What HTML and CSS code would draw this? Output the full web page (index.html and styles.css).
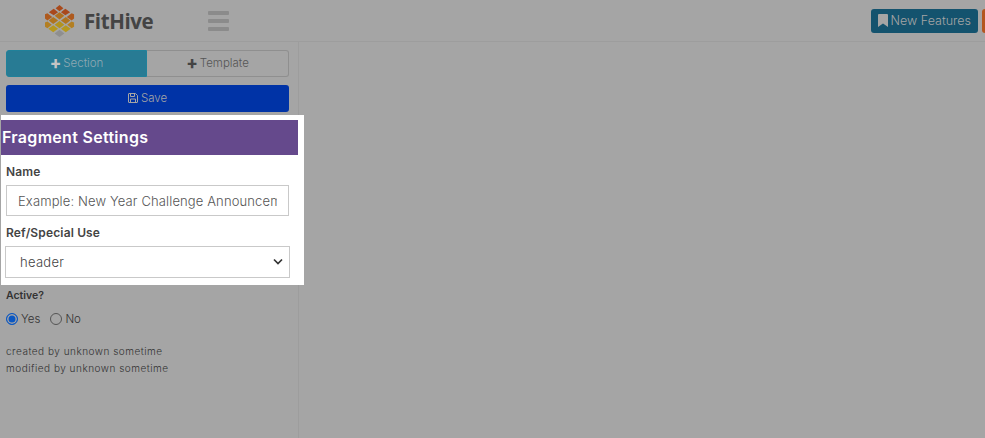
FILE: index.html
```html
<!DOCTYPE html>
<html lang="en">
<head>
    <meta charset="UTF-8">
    <meta name="viewport" content="width=device-width, initial-scale=1.0">
    <title>FitHive</title>
    <link rel="stylesheet" href="styles.css">
</head>
<body>
    <div class="topbar">
        <div class="brand">
            <svg class="logo" width="31" height="33" viewBox="0 0 32 32" preserveAspectRatio="none">
                <polygon points="16,1 20,4 16,7 12,4" fill="#a84a1c"/>
                <polygon points="10,4.500 14.500,8 10,11 5,8" fill="#a9481c"/>
                <polygon points="22,4.500 27,8 22,11 17.500,8" fill="#a9481c"/>
                <polygon points="16,8 21,11.500 16,15 11,11.500" fill="#b0701f"/>
                <polygon points="3.500,9 8.500,12.500 3.500,16 1,14 1,10" fill="#ae5a1e"/>
                <polygon points="28.500,9 31,10 31,14 28.500,16 23.500,12.500" fill="#ae5a1e"/>
                <polygon points="9.500,12.500 14.500,16 9.500,19.500 5,16" fill="#b0741f"/>
                <polygon points="22.500,12.500 27,16 22.500,19.500 17.500,16" fill="#b0741f"/>
                <polygon points="16,16.500 21,20 16,23.500 11,20" fill="#b2931e"/>
                <polygon points="3.500,17 8,20 3.500,23.500 1,22 1,18" fill="#b37f22"/>
                <polygon points="28.500,17 31,18 31,22 28.500,23.500 24,20" fill="#b37f22"/>
                <polygon points="9.500,20.500 14.500,24 9.500,27.500 4.500,24" fill="#b5981e"/>
                <polygon points="22.500,20.500 27.500,24 22.500,27.500 17.500,24" fill="#b5981e"/>
                <polygon points="16,25 21,28.500 16,32 11,28.500" fill="#8f8f8f"/>
            </svg>
            <span class="brand-name">FitHive</span>
        </div>
        <div class="burger"><span></span><span></span><span></span></div>
        <div class="topbar-actions">
            <button class="btn-features">
                <svg width="10" height="13" viewBox="0 0 10 13"><path d="M0 1a1 1 0 0 1 1-1h8a1 1 0 0 1 1 1v12L5 9.500 0 13z" fill="#a5a5a5"/></svg>
                New Features
            </button>
            <div class="btn-orange"></div>
        </div>
    </div>

    <div class="main">
        <div class="sidebar">
            <div class="tabs">
                <div class="tab tab-active"><span class="plus">+</span> Section</div>
                <div class="tab"><span class="plus">+</span> Template</div>
            </div>
            <button class="btn-save">
                <svg width="10" height="10" viewBox="0 0 10 10"><path d="M1 .5h6.500L9.500 2.500V9a.5.5 0 0 1-.5.5H1A.5.5 0 0 1 .5 9V1A.5.5 0 0 1 1 .5zM2.500 1v2.500h4V1M2.500 9V6h5v3" fill="none" stroke="#a5a5a5"/></svg>
                Save
            </button>

            <div class="spotlight">
                <h2 class="panel-title">Fragment Settings</h2>
                <div class="panel-body">
                    <label class="field-label">Name</label>
                    <input class="field-input" type="text" placeholder="Example: New Year Challenge Announcement">
                    <label class="field-label">Ref/Special Use</label>
                    <div class="field-select">
                        <span>header</span>
                        <svg width="10" height="7" viewBox="0 0 10 7"><path d="M1 1.500l4 4 4-4" fill="none" stroke="#333" stroke-width="1.700"/></svg>
                    </div>
                </div>
            </div>

            <div class="active-label">Active?</div>
            <div class="radios">
                <label class="radio-item"><span class="radio radio-on"></span>Yes</label>
                <label class="radio-item"><span class="radio"></span>No</label>
            </div>
            <div class="meta">
                <p>created by unknown sometime</p>
                <p>modified by unknown sometime</p>
            </div>
        </div>
        <div class="canvas"></div>
    </div>
</body>
</html>
```

FILE: styles.css
```css
* {
    margin: 0;
    padding: 0;
    box-sizing: border-box;
}

html, body {
    height: 100%;
    overflow: hidden;
}

body {
    font-family: 'Inter', sans-serif;
    background-color: #a5a5a5;
    color: #444;
    display: flex;
    flex-direction: column;
}

.topbar {
    height: 42px;
    flex: none;
    display: flex;
    align-items: center;
    border-bottom: 1px solid #9d9d9d;
    padding-left: 44px;
}

.brand {
    display: flex;
    align-items: center;
    gap: 9px;
    width: 164px;
}

.logo {
    flex: none;
}

.brand-name {
    font-family: 'Open Sans', sans-serif;
    font-size: 20.500px;
    font-weight: 700;
    letter-spacing: -0.4px;
    color: #444;
}

.burger {
    width: 21px;
    display: flex;
    flex-direction: column;
    gap: 4px;
}

.burger span {
    height: 4px;
    border-radius: 1px;
    background-color: #8b8b8b;
}

.topbar-actions {
    margin-left: auto;
    display: flex;
    align-items: center;
    gap: 4px;
    margin-right: -4px;
}

.btn-features {
    height: 24px;
    padding: 0 7px;
    display: flex;
    align-items: center;
    gap: 3px;
    border: none;
    border-radius: 3px;
    background-color: #14536e;
    color: #a5a5a5;
    font-family: inherit;
    font-size: 12.500px;
    font-weight: 300;
}

.btn-orange {
    width: 7px;
    height: 24px;
    border-radius: 3px 0 0 3px;
    background-color: #b4561f;
}

.main {
    flex: 1;
    display: flex;
}

.sidebar {
    width: 299px;
    flex: none;
    border-right: 1px solid #9d9d9d;
    padding: 8px 9px 0 6px;
}

.tabs {
    display: flex;
    height: 27px;
}

.tab {
    width: 142px;
    flex: none;
    display: flex;
    align-items: center;
    justify-content: center;
    gap: 2px;
    padding-bottom: 1px;
    font-size: 11.500px;
    font-weight: 300;
    color: #555;
    border: 1px solid #8f8f8f;
    border-left: none;
    border-radius: 0 3px 3px 0;
}

.tab-active {
    width: 141px;
    background-color: #287b94;
    border: 1px solid #20819a;
    border-radius: 3px 0 0 3px;
    color: #8fa9b3;
}

.plus {
    font-size: 17px;
    font-weight: 800;
    line-height: 1;
    color: #444;
}

.tab-active .plus {
    color: #c4c4c4;
}

.btn-save {
    width: 100%;
    height: 27px;
    margin-top: 8px;
    padding-bottom: 2px;
    display: flex;
    align-items: center;
    justify-content: center;
    gap: 3px;
    border: none;
    border-radius: 3px;
    background-color: #0033a6;
    color: #a5a5a5;
    font-family: inherit;
    font-size: 11.500px;
    font-weight: 300;
}

.spotlight {
    margin: 3px -15px 0 -5px;
    height: 170px;
    padding-top: 5px;
    background-color: #fff;
}

.panel-title {
    height: 35px;
    width: 297px;
    display: flex;
    align-items: center;
    padding: 0 0 2px 1px;
    background-color: #65498c;
    color: #fff;
    font-size: 16px;
    font-weight: 600;
    letter-spacing: 0.3px;
}

.panel-body {
    padding: 9px 15px 0 5px;
}

.field-label {
    display: block;
    font-size: 12px;
    font-weight: 600;
    letter-spacing: 0.15px;
    color: #444;
}

.field-input {
    display: block;
    width: 283px;
    height: 31px;
    margin: 6px 0 9px;
    padding: 0 11px;
    border: 1px solid #c9c9c9;
    font-family: inherit;
    font-size: 13px;
    font-weight: 300;
    letter-spacing: 0.13px;
}

.field-input::placeholder {
    color: #555;
    opacity: 1;
}

.field-select {
    width: 285px;
    height: 32px;
    margin: 6px 0 0 -1px;
    padding: 0 6px 1px 14px;
    display: flex;
    align-items: center;
    justify-content: space-between;
    border: 1px solid #c9c9c9;
    font-size: 13px;
    font-weight: 300;
    letter-spacing: 0.3px;
    color: #444;
}

.active-label {
    margin-top: 4px;
    font-size: 10.500px;
    font-weight: 600;
    color: #333;
}

.radios {
    display: flex;
    gap: 10px;
    margin-top: 10px;
}

.radio-item {
    display: flex;
    align-items: center;
    gap: 3px;
    font-size: 11.500px;
    font-weight: 300;
    color: #333;
}

.radio {
    width: 12px;
    height: 12px;
    border-radius: 50%;
    border: 1px solid #555;
}

.radio-on {
    border-color: #0b57c2;
    background-color: #0b57c2;
    box-shadow: inset 0 0 0 1.500px #a5a5a5;
}

.meta {
    margin-top: 17px;
    font-size: 10px;
    font-weight: 300;
    letter-spacing: 0.5px;
    line-height: 17px;
    color: #333;
}

.canvas {
    flex: 1;
}
```
